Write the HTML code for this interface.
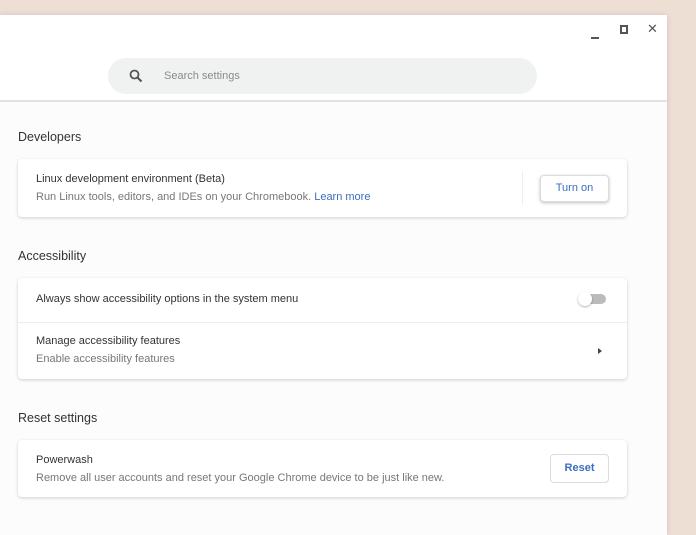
<!DOCTYPE html>
<html><head><style>
*{margin:0;padding:0;box-sizing:border-box}
body{width:696px;height:523px;overflow:hidden;background:#eedfd5;font-family:"Liberation Sans",sans-serif;position:relative}
.win{position:absolute;left:0;top:15px;width:667px;height:520px;background:#fcfcfc;box-shadow:0 0 6px rgba(0,0,0,.12)}
.hdr{position:absolute;left:0;top:0;width:667px;height:87px;background:#fff;border-bottom:2px solid #e2e2e2}
.search{position:absolute;left:108px;top:43px;width:429px;height:36px;border-radius:18px;background:#f0f2f2}
.search span{position:absolute;left:56px;top:12px;font-size:11px;color:#8a8a8a}
.h{position:absolute;left:18px;font-size:12.5px;color:#333}
.card{position:absolute;left:18px;width:609px;background:#fff;border-radius:4px;box-shadow:0 1px 3px rgba(0,0,0,.18)}
.t{position:absolute;left:18px;font-size:11px;color:#333}
.s{position:absolute;left:18px;font-size:11px;color:#777}
.btn{position:absolute;border:1px solid #dadce0;border-radius:4px;background:#fff;color:#3b6fc0;font-size:11px;text-align:center}
</style></head><body>
<div class="win">
<div class="hdr">
 <div style="position:absolute;left:591px;top:22px;width:8px;height:2px;background:#555"></div>
 <div style="position:absolute;left:620px;top:10px;width:8px;height:9px;border:2px solid #555"></div>
 <div style="position:absolute;left:647px;top:6px;font-size:13px;color:#555">✕</div>
 <div class="search">
  <svg style="position:absolute;left:21px;top:11px" width="14" height="14" viewBox="0 0 14 14"><circle cx="5.5" cy="5.5" r="4" fill="none" stroke="#555" stroke-width="1.8"/><path d="M8.5 8.5L12.5 12.5" stroke="#555" stroke-width="2"/></svg>
  <span>Search settings</span>
 </div>
</div>
</div>
<div class="h" style="top:130px">Developers</div>
<div class="card" style="top:159px;height:58px">
 <div class="t" style="top:14px">Linux development environment (Beta)</div>
 <div class="s" style="top:32px">Run Linux tools, editors, and IDEs on your Chromebook. <span style="color:#3b6fc0">Learn more</span></div>
 <div style="position:absolute;left:504px;top:12px;width:1px;height:34px;background:#eee"></div>
 <div class="btn" style="left:522px;top:16px;width:69px;height:27px;line-height:25px;box-shadow:0 1px 3px rgba(0,0,0,.25)">Turn on</div>
</div>
<div class="h" style="top:249px">Accessibility</div>
<div class="card" style="top:278px;height:101px">
 <div class="t" style="top:15px">Always show accessibility options in the system menu</div>
 <div style="position:absolute;left:564px;top:16px;width:24px;height:10px;border-radius:5px;background:#bbb"></div>
 <div style="position:absolute;left:560px;top:14px;width:14px;height:14px;border-radius:50%;background:#fff;box-shadow:0 1px 2px rgba(0,0,0,.3)"></div>
 <div style="position:absolute;left:0;top:44px;width:609px;height:1px;background:#eee"></div>
 <div class="t" style="top:57px">Manage accessibility features</div>
 <div class="s" style="top:75px">Enable accessibility features</div>
 <div style="position:absolute;left:580px;top:70px;width:0;height:0;border-left:4px solid #444;border-top:3px solid transparent;border-bottom:3px solid transparent"></div>
</div>
<div class="h" style="top:411px">Reset settings</div>
<div class="card" style="top:440px;height:57px">
 <div class="t" style="top:14px">Powerwash</div>
 <div class="s" style="top:32px">Remove all user accounts and reset your Google Chrome device to be just like new.</div>
 <div class="btn" style="left:532px;top:14px;width:59px;height:29px;line-height:27px;font-weight:bold">Reset</div>
</div>
</body></html>
